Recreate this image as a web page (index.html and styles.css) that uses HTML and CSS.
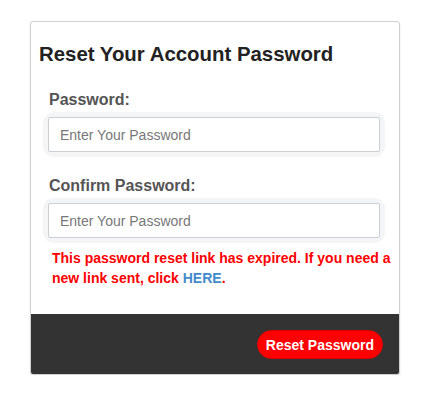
FILE: index.html
```html
<!DOCTYPE html>
<html>
<head>
<meta charset="utf-8">
<link rel="stylesheet" href="styles.css">
</head>
<body>
<div class="card">
  <div class="card-body">
    <h2 class="title">Reset Your Account Password</h2>
    <div class="form">
      <label class="label">Password:</label>
      <div class="field"><input class="input" type="password" placeholder="Enter Your Password"></div>
      <label class="label label-second">Confirm Password:</label>
      <div class="field"><input class="input" type="password" placeholder="Enter Your Password"></div>
    </div>
    <p class="error">This password reset link has expired. If you need a new link sent, click <a class="link" href="#">HERE</a>.</p>
  </div>
  <div class="card-footer">
    <button class="btn">Reset Password</button>
  </div>
</div>
</body>
</html>
```
FILE: styles.css
```css
html, body {
  margin: 0;
  padding: 0;
  background: #fff;
  font-family: "Liberation Sans", Arial, sans-serif;
}
body {
  padding: 21px 0 0 30px;
}
.card {
  width: 368px;
  border: 1px solid #d0d0d0;
  border-radius: 3px;
  box-shadow: 0 1px 2px rgba(0, 0, 0, 0.12);
  overflow: hidden;
  background: #fff;
}
.card-body {
  padding: 21px 0 26px 0;
}
.title {
  margin: 0;
  padding-left: 8px;
  font-size: 20.4px;
  line-height: 22px;
  font-weight: bold;
  color: #222;
}
.form {
  display: flex;
  flex-direction: column;
  padding: 25px 19px 0 17px;
}
.label {
  display: block;
  padding-left: 1px;
  font-size: 16px;
  line-height: 20px;
  font-weight: bold;
  color: #555;
  margin-bottom: 7px;
}
.label-second {
  margin-top: 24px;
}
.field {
  border-radius: 6px;
  box-shadow: 0 0 0 5px #f3f5f7;
}
.input {
  display: block;
  box-sizing: border-box;
  width: 100%;
  height: 35px;
  margin: 0;
  padding: 0 11px;
  border: 1px solid #c9cfd4;
  border-radius: 2px;
  font-family: "Liberation Sans", Arial, sans-serif;
  font-size: 14px;
  color: #555;
  background: #fff;
  outline: none;
}
.input::placeholder {
  color: #777;
}
.error {
  margin: 10px 7px 0 21px;
  font-size: 14px;
  line-height: 20px;
  font-weight: bold;
  color: #f00;
}
.link {
  color: #428bca;
  text-decoration: none;
}
.card-footer {
  height: 60px;
  background: #333;
  display: flex;
  align-items: center;
  justify-content: flex-end;
  padding-right: 16px;
}
.btn {
  height: 29px;
  padding: 0 8px;
  border: 1px solid #e00000;
  border-radius: 15px;
  background: #f00;
  color: #fff;
  font-family: "Liberation Sans", Arial, sans-serif;
  font-size: 14px;
  font-weight: bold;
  cursor: pointer;
  margin-top: 1px;
}
```
